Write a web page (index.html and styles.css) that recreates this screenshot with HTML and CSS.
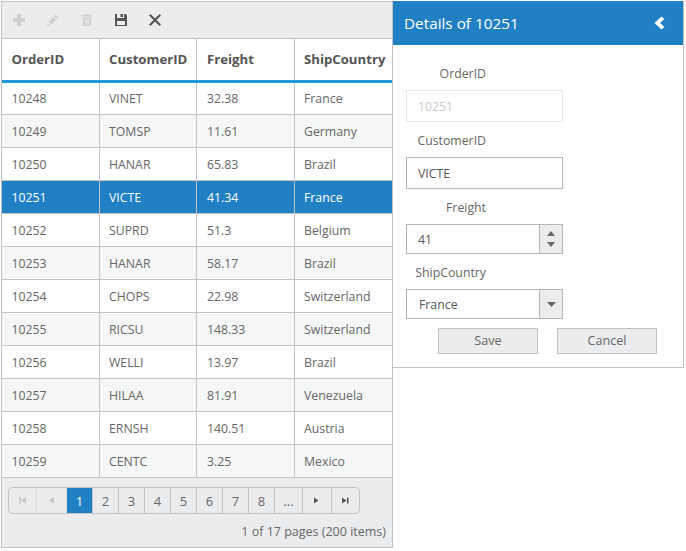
FILE: index.html
```html
<!DOCTYPE html>
<html lang="en">
<head>
<meta charset="utf-8">
<title>Grid details</title>
<link rel="stylesheet" href="styles.css">
</head>
<body>
<div class="page">
  <section class="grid">
    <div class="toolbar">
      <button class="tool off"><svg width="14" height="14" viewBox="0 0 14 14"><path d="M5 1h4v4h4v4H9v4H5V9H1V5h4z"/></svg></button>
      <button class="tool off"><svg width="14" height="14" viewBox="0 0 14 14"><path d="M9.500 1.500l3 3-1.500 1.500-3-3zM7 4l3 3-4.500 4.500-3-3zM1.500 9.500l3 3-3.500.5z"/></svg></button>
      <button class="tool off"><svg width="14" height="14" viewBox="0 0 14 14"><path d="M5 1h4v1h3v1.500H2V2h3zM3 4.500h8V13H3zM4.800 6v5.500h1V6zM6.500 6v5.500h1V6zM8.200 6v5.500h1V6z" fill-rule="evenodd"/></svg></button>
      <button class="tool"><svg width="14" height="14" viewBox="0 0 14 14"><path d="M1 1h2v4h7V1h1.500L13 2.500V13H1zM6.500 1H9v3H6.500zM3 8v4h8V8z" fill-rule="evenodd"/></svg></button>
      <button class="tool"><svg width="14" height="14" viewBox="0 0 14 14"><path d="M2.500 1L7 5.500 11.500 1 13 2.500 8.500 7 13 11.500 11.500 13 7 8.500 2.500 13 1 11.500 5.500 7 1 2.500z"/></svg></button>
    </div>
    <table class="data">
      <colgroup><col class="c1"><col class="c2"><col class="c3"><col class="c4"></colgroup>
      <thead><tr><th>OrderID</th><th>CustomerID</th><th>Freight</th><th>ShipCountry</th></tr></thead>
      <tbody>
        <tr><td>10248</td><td>VINET</td><td>32.38</td><td>France</td></tr>
        <tr class="alt"><td>10249</td><td>TOMSP</td><td>11.61</td><td>Germany</td></tr>
        <tr><td>10250</td><td>HANAR</td><td>65.83</td><td>Brazil</td></tr>
        <tr class="sel"><td>10251</td><td>VICTE</td><td>41.34</td><td>France</td></tr>
        <tr><td>10252</td><td>SUPRD</td><td>51.3</td><td>Belgium</td></tr>
        <tr class="alt"><td>10253</td><td>HANAR</td><td>58.17</td><td>Brazil</td></tr>
        <tr><td>10254</td><td>CHOPS</td><td>22.98</td><td>Switzerland</td></tr>
        <tr class="alt"><td>10255</td><td>RICSU</td><td>148.33</td><td>Switzerland</td></tr>
        <tr><td>10256</td><td>WELLI</td><td>13.97</td><td>Brazil</td></tr>
        <tr class="alt"><td>10257</td><td>HILAA</td><td>81.91</td><td>Venezuela</td></tr>
        <tr><td>10258</td><td>ERNSH</td><td>140.51</td><td>Austria</td></tr>
        <tr class="alt"><td>10259</td><td>CENTC</td><td>3.25</td><td>Mexico</td></tr>
      </tbody>
    </table>
    <div class="pagerbar">
      <div class="pager">
        <span class="pg nav w0 dim"><svg width="9" height="9" viewBox="0 0 9 9"><path d="M1 1h1.500v7H1zM8 1v7L3 4.500z"/></svg></span>
        <span class="pg nav w2 dim"><svg width="9" height="9" viewBox="0 0 9 9"><path d="M7 1v7L2 4.500z"/></svg></span>
        <span class="pg cur">1</span>
        <span class="pg">2</span><span class="pg">3</span><span class="pg">4</span><span class="pg">5</span><span class="pg">6</span><span class="pg">7</span><span class="pg">8</span>
        <span class="pg more">...</span>
        <span class="pg nav w1"><svg width="9" height="9" viewBox="0 0 9 9"><path d="M1 1.500v6l4.500-3z"/></svg></span>
        <span class="pg nav w1 end"><svg width="9" height="9" viewBox="0 0 9 9"><path d="M0 1.500v6l4.500-3zM5 1.500h1.500v6H5z"/></svg></span>
      </div>
      <div class="pageinfo">1 of 17 pages (200 items)</div>
    </div>
  </section>
  <aside class="panel">
    <header class="phead"><span>Details of 10251</span><svg width="12" height="14" viewBox="0 0 12 14"><path d="M8.500 0.500l2.800 2.500-4.200 4 4.200 4-2.800 2.500L1.500 7z"/></svg></header>
    <div class="form">
      <label class="lab">OrderID</label>
      <div class="field ro">10251</div>
      <label class="lab">CustomerID</label>
      <div class="field">VICTE</div>
      <label class="lab">Freight</label>
      <div class="field combo"><span class="val">41</span><span class="spin"><svg width="8" height="5" viewBox="0 0 8 5"><path d="M4 0l4 5H0z"/></svg><svg width="8" height="5" viewBox="0 0 8 5"><path d="M0 0h8L4 5z"/></svg></span></div>
      <label class="lab">ShipCountry</label>
      <div class="field combo"><span class="val fr">France</span><span class="drop"><svg width="9" height="5" viewBox="0 0 9 5"><path d="M0 0h9L4.500 5z"/></svg></span></div>
      <div class="btns"><button class="btn">Save</button><button class="btn">Cancel</button></div>
    </div>
  </aside>
</div>
</body>
</html>
```
FILE: styles.css
```css
* { box-sizing: border-box; }
html, body { margin: 0; padding: 0; background: #fff; }
body { font-family: "Open Sans", "Noto Sans", sans-serif; font-size: 12.3px; color: #666; }
.page { display: flex; align-items: flex-start; padding: 1px 0 0 1px; }
.grid { width: 392px; height: 547px; border: 1px solid #c3c3c3; background: #ebecee; display: flex; flex-direction: column; }
.toolbar { height: 36px; display: flex; align-items: center; padding: 0 0 0 8px; gap: 16px; background: #ebecee; flex: none; }
.tool { width: 18px; height: 18px; padding: 0; border: 0; background: none; display: flex; align-items: center; justify-content: center; fill: #555; }
.tool.off { fill: #cfcfcf; }
.data { width: 390px; border-collapse: collapse; table-layout: fixed; background: #fff; flex: none; }
.c1 { width: 97px; } .c2 { width: 97px; } .c3 { width: 98px; } .c4 { width: 98px; }
th { height: 43px; padding: 0 0 2px 9.500px; text-align: left; font-size: 13.2px; font-weight: 700; color: #555; background: #fff; border: 1px solid #c3c3c3; border-bottom: 3px solid #1e9bd7; border-left: 0; white-space: nowrap; overflow: hidden; }
th:last-child, td:last-child { border-right: 0; }
td { height: 33px; padding: 0 0 0 9.500px; border: 1px solid #c3c3c3; border-left: 0; border-top: 0; white-space: nowrap; }
th:nth-child(3), td:nth-child(3) { padding-left: 10.500px; }
.alt td { background: #f5f7f7; }
.sel td { background: #2180c4; color: #fff; font-weight: 400; }
.pagerbar { flex: 1; background: #ebecee; padding: 9px 6px 0 6px; }
.pager { display: flex; width: 352px; height: 27px; border: 1px solid #c3c3c3; border-radius: 5px; }
.pg { width: 26px; display: flex; align-items: center; justify-content: center; border-right: 1px solid #c3c3c3; color: #666; font-size: 13px; flex: none; }
.nav { fill: #555; }
.w0 { width: 28px; } .w1 { width: 29px; } .w2 { width: 30px; }
.dim { fill: #c9c9c9; border-right-color: #dcdcdc; }
.cur { background: #2180c4; color: #fff; }
.more { width: 28px; }
.end { border-right: 0; }
.pageinfo { text-align: right; font-size: 12.5px; line-height: 18px; margin-top: 9px; }
.panel { width: 292px; height: 367px; border: 1px solid #c3c3c3; border-top: 0; background: #fff; margin-left: -1px; display: flex; flex-direction: column; position: relative; }
.phead { height: 44px; flex: none; background: #2180c4; color: #fff; font-size: 15.300px; display: flex; align-items: center; justify-content: space-between; padding: 0 18px 0 11px; fill: #fff; }
.form { padding: 19px 0 0 13px; font-size: 12.300px; }
.lab { display: block; width: 80px; text-align: right; height: 18px; line-height: 20px; margin-bottom: 8px; color: #666; white-space: nowrap; }
.field { width: 157px; height: 32px; border: 1px solid #b5b5b5; padding-left: 11px; line-height: 31px; color: #555; margin-bottom: 9px; }
.ro { border-color: #e6e6e6; color: #c9c9c9; margin-bottom: 9px; }
.combo { display: flex; height: 30px; padding: 0; line-height: 29px; margin-bottom: 9px; }
.val { flex: 1; padding-left: 11px; }
.fr { padding-left: 12px; }
.spin, .drop { width: 23px; flex: none; background: #ebecee; border-left: 1px solid #b5b5b5; display: flex; flex-direction: column; align-items: center; justify-content: space-around; fill: #666; padding: 3px 0; }
.drop { justify-content: center; }
.btns { display: flex; gap: 19px; margin: 0 0 0 32px; }
.btn { width: 100px; height: 26px; padding: 0; border: 1px solid #c3c3c3; background: #ebecee; color: #666; font: 12.600px/22px "Open Sans", "Noto Sans", sans-serif; }
```
